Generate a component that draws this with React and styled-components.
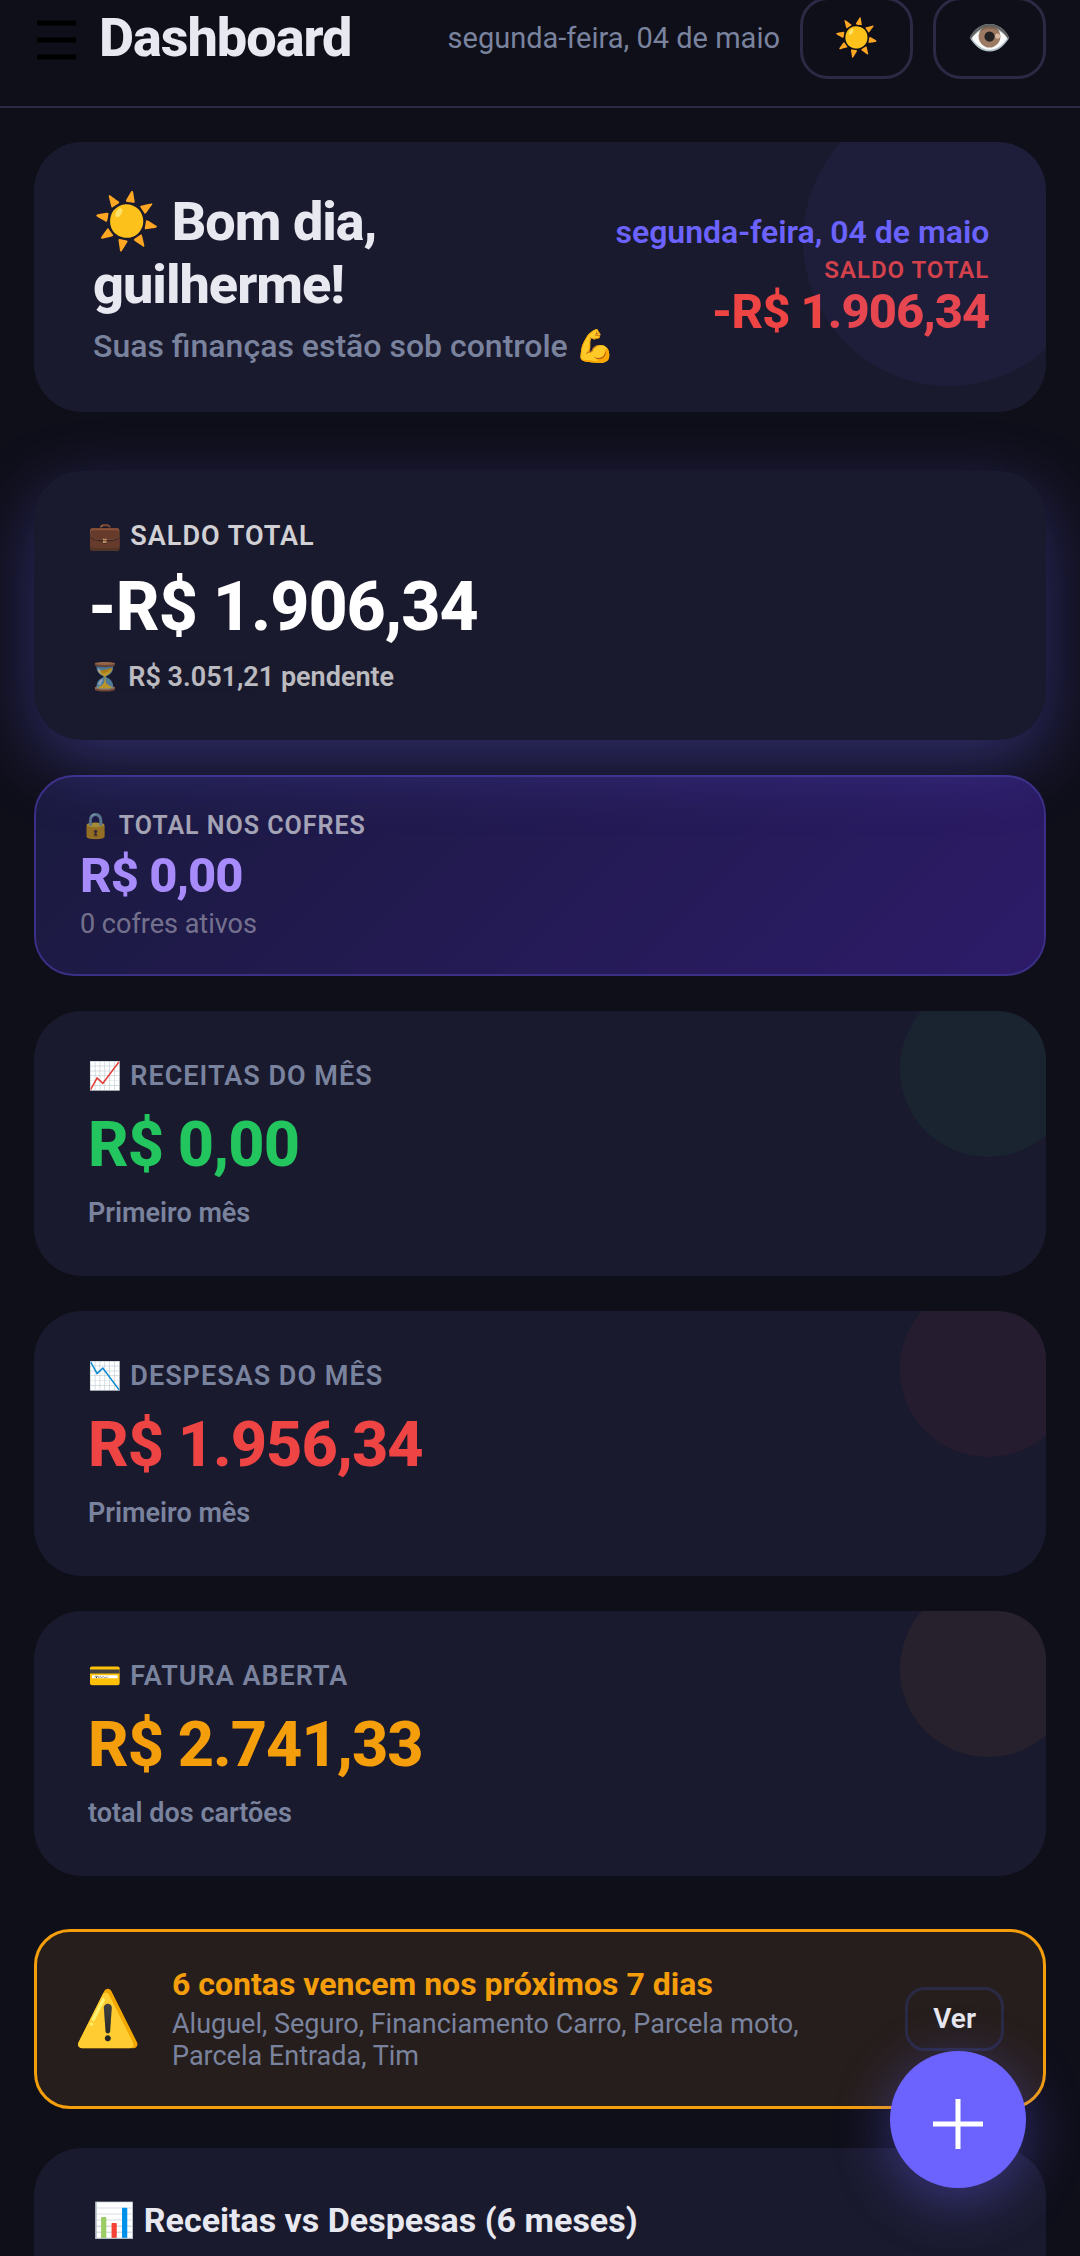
import React from 'react';
import styled, { createGlobalStyle } from 'styled-components';

const c = {
  bg: '#0f0f1a',
  card: '#1a1a2e',
  border: '#2a2a45',
  text: '#e8e8f0',
  muted: '#7a839e',
  primary: '#6c63ff',
  green: '#22c55e',
  red: '#ef4444',
  amber: '#f59e0b',
  lilac: '#a78bfa',
};

const GlobalStyle = createGlobalStyle`
  *, *::before, *::after { box-sizing: border-box; }
  body {
    margin: 0;
    background: ${c.bg};
    color: ${c.text};
    font-family: Roboto, 'Noto Color Emoji', sans-serif;
  }
  h1, h2, p { margin: 0; }
  button { font-family: inherit; color: inherit; cursor: pointer; }
`;

const Page = styled.div`
  display: flex;
  flex-direction: column;
  min-height: 100vh;
  overflow: hidden;
`;

const Header = styled.header`
  display: flex;
  align-items: center;
  gap: 20px;
  margin-top: -30px;
  padding: 27px 34px;
  border-bottom: 2px solid ${c.border};
`;

const MenuButton = styled.button`
  display: flex;
  padding: 0;
  border: 0;
  background: none;
`;

const PageTitle = styled.h1`
  flex: 1;
  font-size: 54px;
  line-height: 64px;
  font-weight: 800;
  letter-spacing: -1px;
`;

const HeaderDate = styled.span`
  font-size: 29px;
  line-height: 36px;
  color: ${c.muted};
`;

const IconButton = styled.button`
  display: flex;
  align-items: center;
  justify-content: center;
  width: 113px;
  height: 82px;
  padding: 0;
  border: 3px solid ${c.border};
  border-radius: 28px;
  background: none;
  font-size: 36px;
  line-height: 42px;
`;

const Main = styled.main`
  display: flex;
  flex: 1;
  flex-direction: column;
  padding: 34px 34px 0;
`;

const Surface = styled.section`
  position: relative;
  overflow: hidden;
  border-radius: 48px;
  background: ${c.card};
`;

const Hero = styled(Surface)`
  display: flex;
  align-items: center;
  justify-content: space-between;
  margin-bottom: 59px;
  padding: 48px 59px;

  &::after {
    content: '';
    position: absolute;
    top: -48px;
    right: -49px;
    width: 292px;
    height: 292px;
    border-radius: 50%;
    background: ${c.primary};
    opacity: 0.06;
  }
`;

const Greeting = styled.h2`
  max-width: 400px;
  margin-bottom: 12px;
  font-size: 54px;
  line-height: 63px;
  font-weight: 800;
  letter-spacing: -1px;
`;

const HeroNote = styled.p`
  font-size: 32px;
  line-height: 36px;
  font-weight: 500;
  color: ${c.muted};
  white-space: nowrap;
`;

const HeroSide = styled.div`
  text-align: right;
  white-space: nowrap;
`;

const HeroDate = styled.p`
  margin-bottom: 6px;
  font-size: 32px;
  line-height: 36px;
  font-weight: 600;
  color: ${c.primary};
`;

const HeroLabel = styled.p`
  font-size: 24px;
  line-height: 28px;
  font-weight: 600;
  letter-spacing: 1px;
  color: ${c.red};
  opacity: 0.9;
`;

const HeroValue = styled.p`
  font-size: 49px;
  line-height: 56px;
  font-weight: 800;
  letter-spacing: -1px;
  color: ${c.red};
`;

const Stack = styled.div`
  display: flex;
  flex-direction: column;
  gap: 35px;
  margin-bottom: 53px;
`;

const StatCard = styled(Surface)`
  padding: 49px 54px 47px;
  ${({ $glow }) => $glow && `box-shadow: 0 22px 68px rgba(108, 99, 255, 0.35);`}
  ${({ $tone }) => $tone && `
    &::after {
      content: '';
      position: absolute;
      top: -30px;
      right: -30px;
      width: 176px;
      height: 176px;
      border-radius: 50%;
      background: ${$tone};
      opacity: 0.06;
    }
  `}
`;

const StatLabel = styled.h2`
  margin-bottom: 17px;
  font-size: 27px;
  line-height: 32px;
  font-weight: 600;
  letter-spacing: 1px;
  color: ${({ $light }) => ($light ? '#fff' : c.muted)};
  opacity: ${({ $light }) => ($light ? 0.8 : 1)};
`;

const StatValue = styled.p`
  margin-bottom: 16px;
  font-size: ${({ $large }) => ($large ? 68 : 63)}px;
  line-height: ${({ $large }) => ($large ? 76 : 72)}px;
  font-weight: 800;
  letter-spacing: -1px;
  color: ${({ $tone }) => $tone};
`;

const StatNote = styled.p`
  font-size: 27px;
  line-height: 32px;
  font-weight: 600;
  color: ${({ $light }) => ($light ? '#fff' : c.muted)};
  opacity: ${({ $light }) => ($light ? 0.7 : 1)};
`;

const VaultCard = styled.section`
  padding: 35px 44px 34px;
  border: 2px solid #3b2f86;
  border-radius: 40px;
  background: linear-gradient(135deg, #1a1a3e, #2d1b69);
`;

const VaultLabel = styled.h2`
  margin: 0 0 8px;
  font-size: 25px;
  line-height: 28px;
  font-weight: 600;
  letter-spacing: 1px;
  color: #fff;
  opacity: 0.6;
`;

const VaultValue = styled.p`
  margin-bottom: 4px;
  font-size: 49px;
  line-height: 56px;
  font-weight: 800;
  letter-spacing: -1px;
  color: ${c.lilac};
`;

const VaultNote = styled.p`
  font-size: 27px;
  line-height: 32px;
  color: rgba(255, 255, 255, 0.4);
`;

const Alert = styled.section`
  display: flex;
  align-items: center;
  gap: 32px;
  margin-bottom: 39px;
  padding: 34px 39px;
  border: 3px solid ${c.amber};
  border-radius: 36px;
  background: #261e1c;
`;

const AlertIcon = styled.span`
  display: flex;
  justify-content: center;
  width: 64px;
  font-size: 54px;
  line-height: 60px;
`;

const AlertBody = styled.div`
  flex: 1;
`;

const AlertTitle = styled.h2`
  margin-bottom: 6px;
  font-size: 32px;
  line-height: 36px;
  font-weight: 700;
  color: ${c.amber};
`;

const AlertText = styled.p`
  font-size: 27px;
  line-height: 32px;
  color: ${c.muted};
`;

const ViewButton = styled.button`
  height: 64px;
  padding: 0 25px;
  border: 3px solid ${c.border};
  border-radius: 20px;
  background: none;
  font-size: 28px;
  line-height: 32px;
  font-weight: 600;
`;

const ChartCard = styled(Surface)`
  flex: 1;
  padding: 52px 59px 0;
  border-radius: 48px 48px 0 0;
`;

const ChartTitle = styled.h2`
  font-size: 34px;
  line-height: 40px;
  font-weight: 700;
`;

const AddButton = styled.button`
  position: fixed;
  right: 54px;
  bottom: 68px;
  display: flex;
  align-items: center;
  justify-content: center;
  width: 136px;
  height: 137px;
  padding: 8px 0 0;
  border: 0;
  border-radius: 50%;
  background: ${c.primary};
  box-shadow: 0 12px 56px rgba(108, 99, 255, 0.4);
`;

const stats = [
  { label: '📈 RECEITAS DO MÊS', value: 'R$ 0,00', note: 'Primeiro mês', tone: c.green },
  { label: '📉 DESPESAS DO MÊS', value: 'R$ 1.956,34', note: 'Primeiro mês', tone: c.red },
  { label: '💳 FATURA ABERTA', value: 'R$ 2.741,33', note: 'total dos cartões', tone: c.amber },
];

export default function App() {
  return (
    <Page>
      <GlobalStyle />
      <Header>
        <MenuButton aria-label="Menu">
          <svg width="45" height="44" viewBox="0 0 45 44" aria-hidden="true">
            <path d="M3 7h39M3 24h39M3 41h39" stroke="#000" strokeWidth="5" />
          </svg>
        </MenuButton>
        <PageTitle>Dashboard</PageTitle>
        <HeaderDate>segunda-feira, 04 de maio</HeaderDate>
        <IconButton aria-label="Tema">☀️</IconButton>
        <IconButton aria-label="Ocultar valores">👁️</IconButton>
      </Header>
      <Main>
        <Hero>
          <div>
            <Greeting>☀️ Bom dia, guilherme!</Greeting>
            <HeroNote>Suas finanças estão sob controle 💪</HeroNote>
          </div>
          <HeroSide>
            <HeroDate>segunda-feira, 04 de maio</HeroDate>
            <HeroLabel>SALDO TOTAL</HeroLabel>
            <HeroValue>-R$ 1.906,34</HeroValue>
          </HeroSide>
        </Hero>
        <Stack>
          <StatCard $glow>
            <StatLabel $light>💼 SALDO TOTAL</StatLabel>
            <StatValue $large $tone="#fff">-R$ 1.906,34</StatValue>
            <StatNote $light>⏳ R$ 3.051,21 pendente</StatNote>
          </StatCard>
          <VaultCard>
            <VaultLabel>🔒 TOTAL NOS COFRES</VaultLabel>
            <VaultValue>R$ 0,00</VaultValue>
            <VaultNote>0 cofres ativos</VaultNote>
          </VaultCard>
          {stats.map((s) => (
            <StatCard key={s.label} $tone={s.tone}>
              <StatLabel>{s.label}</StatLabel>
              <StatValue $tone={s.tone}>{s.value}</StatValue>
              <StatNote>{s.note}</StatNote>
            </StatCard>
          ))}
        </Stack>
        <Alert>
          <AlertIcon>⚠️</AlertIcon>
          <AlertBody>
            <AlertTitle>6 contas vencem nos próximos 7 dias</AlertTitle>
            <AlertText>
              Aluguel, Seguro, Financiamento Carro, Parcela moto, Parcela Entrada, Tim
            </AlertText>
          </AlertBody>
          <ViewButton>Ver</ViewButton>
        </Alert>
        <ChartCard>
          <ChartTitle>📊 Receitas vs Despesas (6 meses)</ChartTitle>
        </ChartCard>
      </Main>
      <AddButton aria-label="Adicionar">
        <svg width="50" height="50" viewBox="0 0 50 50" aria-hidden="true">
          <path d="M25 0v50M0 25h50" stroke="#fff" strokeWidth="5" />
        </svg>
      </AddButton>
    </Page>
  );
}
